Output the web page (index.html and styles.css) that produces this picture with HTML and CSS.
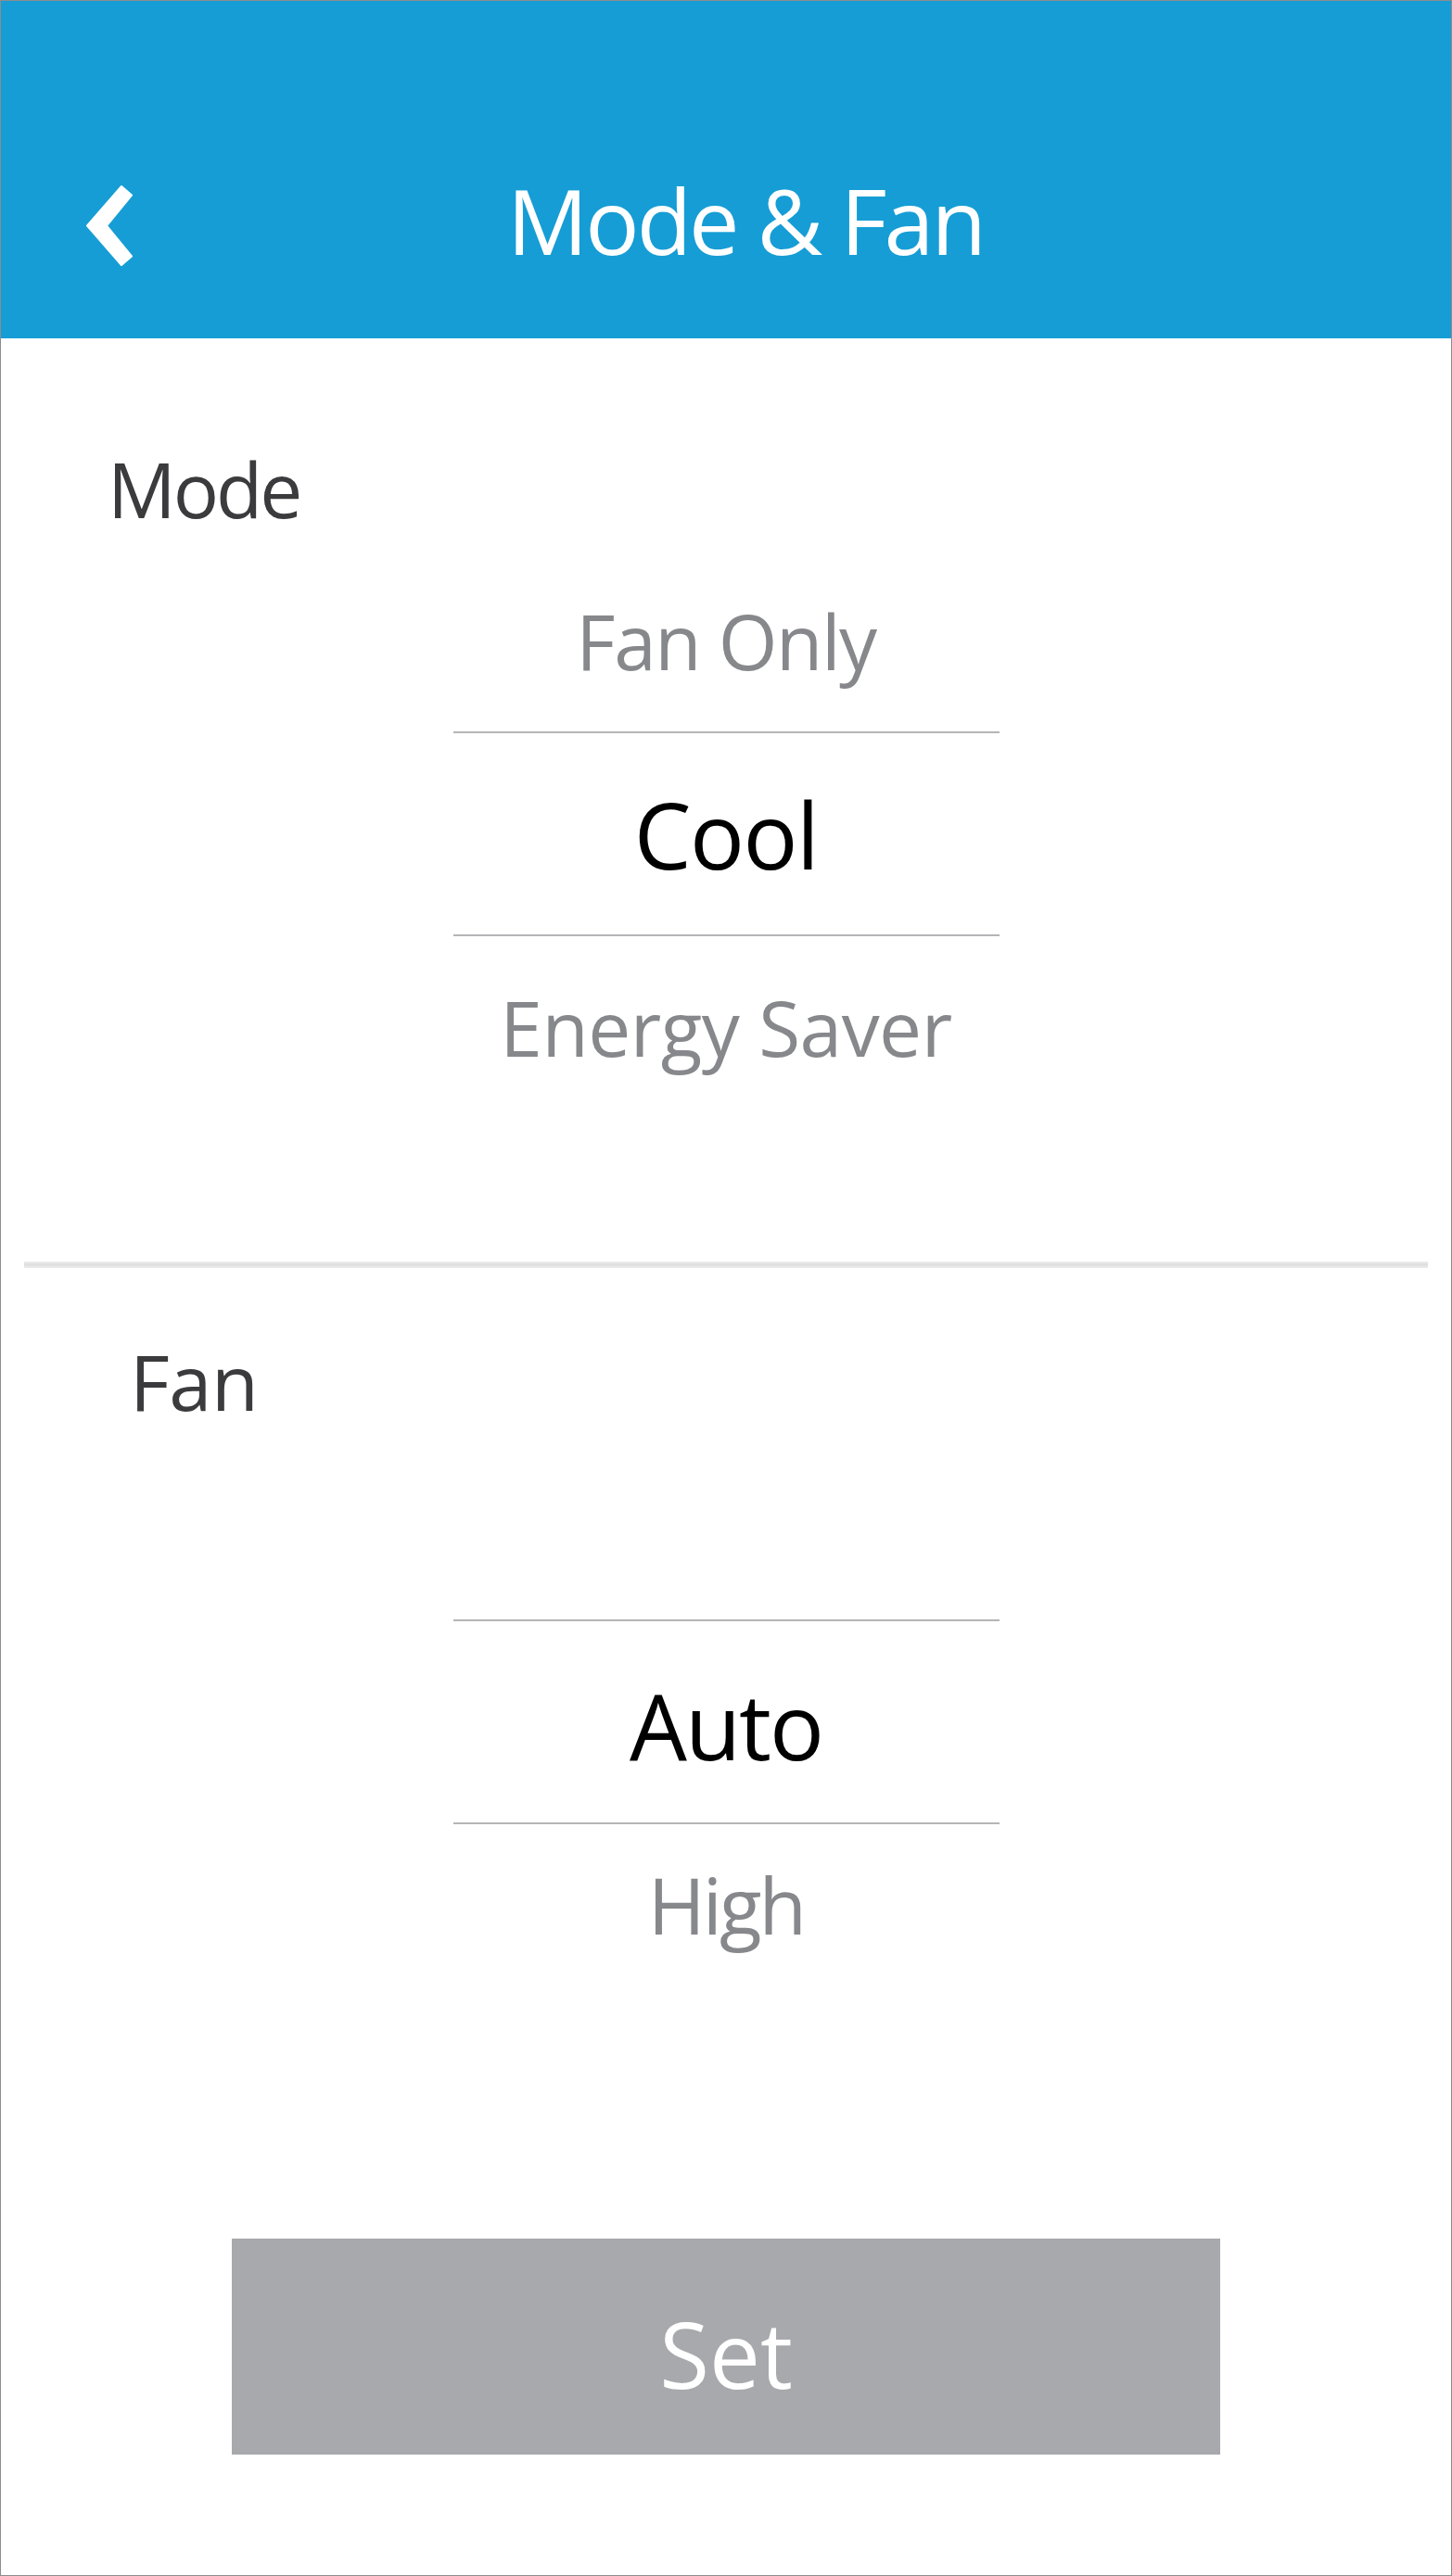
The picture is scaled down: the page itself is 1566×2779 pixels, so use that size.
FILE: index.html
```html
<!DOCTYPE html>
<html lang="en">
<head>
<meta charset="utf-8">
<title>Mode &amp; Fan</title>
<link rel="stylesheet" href="styles.css">
</head>
<body>
<div class="screen">
  <header class="app-header">
    <div class="status-area"></div>
    <nav class="nav-bar">
      <button class="back-btn" aria-label="Back">
        <svg class="back-icon" width="50" height="87" viewBox="0 0 50 87">
          <polygon points="1,43.5 38,1 49,10.5 22,43.5 49,76.5 38,86" fill="#fff" stroke="#fff" stroke-width="2" stroke-linejoin="round"/>
        </svg>
      </button>
      <h1 class="nav-title">Mode &amp; Fan</h1>
    </nav>
  </header>

  <main class="content">
    <section class="section section-mode">
      <h2 class="section-label label-mode">Mode</h2>
      <div class="picker picker-mode">
        <div class="option option-above option-fan-only">Fan Only</div>
        <div class="selected-row"><span class="selected-text">Cool</span></div>
        <div class="option option-below option-energy">Energy Saver</div>
      </div>
    </section>

    <div class="divider"></div>

    <section class="section section-fan">
      <h2 class="section-label label-fan">Fan</h2>
      <div class="picker picker-fan">
        <div class="option option-above option-empty"></div>
        <div class="selected-row"><span class="selected-text selected-auto">Auto</span></div>
        <div class="option option-below option-high">High</div>
      </div>
    </section>

    <div class="actions">
      <button class="set-btn">Set</button>
    </div>
  </main>
</div>
</body>
</html>
```

FILE: styles.css
```css
* {
  box-sizing: border-box;
}

html, body {
  margin: 0;
  padding: 0;
  background: #ffffff;
}

body {
  font-family: "Open Sans", "Noto Sans", "Liberation Sans", sans-serif;
}

.screen {
  width: 1566px;
  height: 2779px;
  border: 1px solid #8c8c8c;
  background: #ffffff;
  display: flex;
  flex-direction: column;
  overflow: hidden;
}

/* Header */
.app-header {
  background: #169dd5;
  height: 364px;
  display: flex;
  flex-direction: column;
}

.status-area {
  height: 120px;
}

.nav-bar {
  height: 244px;
  display: flex;
  align-items: center;
  padding-left: 92px;
}

.back-btn {
  width: 50px;
  height: 87px;
  padding: 0;
  border: 0;
  background: transparent;
  display: flex;
}

.back-icon {
  display: block;
}

.nav-title {
  flex: 1;
  margin: 0 0 11px 0;
  padding-right: 100px;
  text-align: center;
  color: #ffffff;
  font-weight: 400;
  font-size: 97px;
  line-height: 97px;
  letter-spacing: -3px;
}

/* Content */
.content {
  display: flex;
  flex-direction: column;
}

.section {
  display: flex;
  flex-direction: column;
}

.section-label {
  margin: 0;
  color: #3b3b3d;
  font-weight: 400;
}

.label-mode {
  margin-top: 121px;
  margin-bottom: 82px;
  padding-left: 115px;
  font-size: 82px;
  line-height: 82px;
  letter-spacing: -3px;
}

.label-fan {
  margin-top: 80px;
  margin-bottom: 77px;
  padding-left: 139px;
  font-size: 83px;
  line-height: 83px;
  letter-spacing: -0.5px;
}

.picker {
  width: 589px;
  margin: 0 auto;
  display: flex;
  flex-direction: column;
  text-align: center;
}

.option {
  color: #87888c;
  font-size: 82px;
  line-height: 82px;
  height: 82px;
  letter-spacing: -1.5px;
  white-space: nowrap;
}

.option-above {
  margin-bottom: 57px;
}

.option-below {
  margin-top: 57px;
}

.option-energy {
  letter-spacing: -0.5px;
}

.option-high {
  margin-top: 45px;
  font-size: 84px;
  line-height: 84px;
  height: 84px;
  letter-spacing: -3px;
}

.selected-row {
  height: 221px;
  border-top: 2px solid #b5b5b7;
  border-bottom: 2px solid #b5b5b7;
  display: flex;
  align-items: center;
  justify-content: center;
}

.selected-text {
  color: #000000;
  font-size: 98px;
  line-height: 98px;
  letter-spacing: -1.5px;
}

.selected-auto {
  padding-top: 6px;
  letter-spacing: -2px;
}

.divider {
  margin: 212px 25px 0 25px;
  height: 7px;
  background: linear-gradient(#ececec, #dedede 50%, #eeeeee);
}

/* Set button */
.actions {
  margin-top: 318px;
  display: flex;
  justify-content: center;
}

.set-btn {
  width: 1066px;
  height: 233px;
  border: 0;
  padding: 15px 0 0 0;
  background: #a8a9ad;
  color: #ffffff;
  font-family: "Open Sans", "Noto Sans", "Liberation Sans", sans-serif;
  font-size: 98px;
  line-height: 98px;
  font-weight: 400;
}
```
